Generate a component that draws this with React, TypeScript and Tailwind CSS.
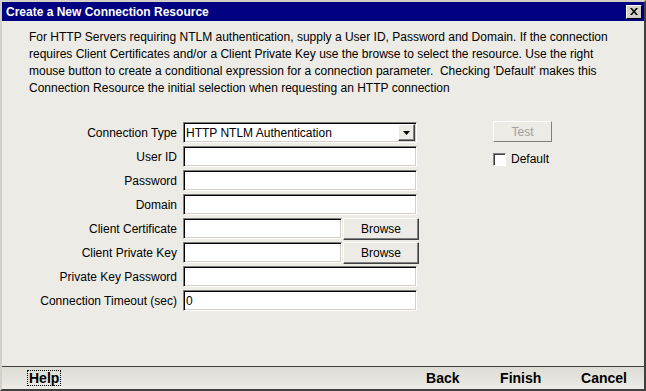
import React from "react";

const font = { fontFamily: '"Liberation Sans", Arial, sans-serif' };

function Sunken({ className = "", children }: { className?: string; children?: React.ReactNode }) {
  return (
    <div
      className={`h-[21px] border border-t-[#808080] border-l-[#808080] border-b-white border-r-white bg-white shadow-[inset_1px_1px_0_#000,inset_-1px_-1px_0_#d4d0c8] ${className}`}
    >
      {children}
    </div>
  );
}

function Raised({ className = "", children, disabled }: { className?: string; children: React.ReactNode; disabled?: boolean }) {
  return (
    <div
      className={`flex items-center justify-center border border-t-white border-l-white border-b-[#404040] border-r-[#404040] bg-[#ecebe5] shadow-[inset_-1px_-1px_0_#808080] text-[12px] ${disabled ? "text-[#a0a0a0]" : "text-black"} ${className}`}
    >
      {children}
    </div>
  );
}

function Row({ label, children }: { label: string; children: React.ReactNode }) {
  return (
    <div className="flex h-[21px] items-center">
      <div className="w-[176px] pr-[1px] text-right text-[12px] text-black">{label}</div>
      <div className="ml-[5px] flex">{children}</div>
    </div>
  );
}

export default function App() {
  return (
    <div
      className="flex h-[391px] w-[646px] flex-col border-l-2 border-r-2 border-b-2 border-t-2 border-t-[#d4d0c8] border-l-[#d4d0c8] border-r-[#404040] border-b-[#404040] bg-[#ecebe5]"
      style={font}
    >
      {/* title bar */}
      <div className="flex h-[19px] items-center justify-between bg-[#000080] pl-[4px] pr-[2px]">
        <span className="text-[12px] font-bold text-white">Create a New Connection Resource</span>
        <div className="flex h-[14px] w-[16px] items-center justify-center border border-t-white border-l-white border-b-[#000] border-r-[#000] bg-[#d4d0c8]">
          <svg width="8" height="7" viewBox="0 0 8 7">
            <path d="M0 0h2l2 2.5L6 0h2L5 3.5 8 7H6L4 4.5 2 7H0l3-3.5z" fill="#000" />
          </svg>
        </div>
      </div>

      <div className="flex-1">
        {/* description */}
        <p className="pl-[27px] pr-[14px] pt-[8px] text-[12px] leading-[17px] text-black">
          For HTTP Servers requiring NTLM authentication, supply a User ID, Password and Domain. If the connection
          requires Client Certificates and/or a Client Private Key use the browse to select the resource. Use the right
          mouse button to create a conditional expression for a connection parameter.&nbsp; Checking 'Default' makes
          this Connection Resource the initial selection when requesting an HTTP connection
        </p>

        <div className="mt-[25px] flex">
          {/* form */}
          <div className="flex w-[430px] flex-col gap-[3px]">
            <Row label="Connection Type">
              <Sunken className="relative flex w-[234px] items-center pl-[2px] text-[12px] text-black">
                HTTP NTLM Authentication
                <Raised className="absolute right-[1px] top-[1px] h-[17px] w-[17px]">
                  <svg width="7" height="4" viewBox="0 0 7 4">
                    <path d="M0 0h7L3.5 4z" fill="#000" />
                  </svg>
                </Raised>
              </Sunken>
            </Row>
            <Row label="User ID">
              <Sunken className="w-[234px]" />
            </Row>
            <Row label="Password">
              <Sunken className="w-[234px]" />
            </Row>
            <Row label="Domain">
              <Sunken className="w-[234px]" />
            </Row>
            <Row label="Client Certificate">
              <Sunken className="w-[159px]" />
              <Raised className="ml-[1px] h-[22px] w-[76px]">Browse</Raised>
            </Row>
            <Row label="Client Private Key">
              <Sunken className="w-[159px]" />
              <Raised className="ml-[1px] h-[22px] w-[76px]">Browse</Raised>
            </Row>
            <Row label="Private Key Password">
              <Sunken className="w-[234px]" />
            </Row>
            <Row label="Connection Timeout (sec)">
              <Sunken className="flex w-[234px] items-center pl-[2px] text-[12px] text-black">0</Sunken>
            </Row>
          </div>

          {/* side */}
          <div className="ml-[61px] flex flex-col">
            <Raised disabled className="-mt-[1px] h-[21px] w-[59px] shadow-none border-b-[#808080] border-r-[#808080]">
              Test
            </Raised>
            <div className="mt-[8px] flex items-center gap-[5px] text-[12px] text-black">
              <div className="h-[13px] w-[13px] border border-t-[#808080] border-l-[#808080] border-b-white border-r-white bg-white shadow-[inset_1px_1px_0_#404040]" />
              Default
            </div>
          </div>
        </div>
      </div>

      {/* footer */}
      <div className="flex h-[23px] items-center border-t border-t-[#404040] bg-gradient-to-b from-[#dcdbd4] to-[#ecebe5] text-[14px] font-bold text-black">
        <span className="ml-[25px] border border-dotted border-black px-[1px] leading-[14px]">Help</span>
        <span className="ml-auto w-[74px]">Back</span>
        <span className="w-[81px]">Finish</span>
        <span className="mr-[17px]">Cancel</span>
      </div>
    </div>
  );
}
